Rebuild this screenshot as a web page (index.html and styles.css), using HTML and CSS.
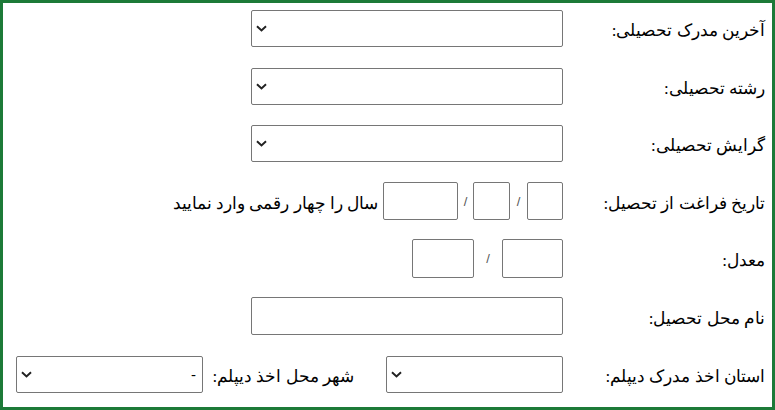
FILE: index.html
```html
<!DOCTYPE html>
<html lang="fa" dir="rtl">
<head>
<meta charset="utf-8">
<link rel="stylesheet" href="styles.css">
</head>
<body>
<div class="frame">
  <div class="row r1">
    <label class="lbl">آخرین مدرک تحصیلی:</label>
    <select class="sel wide"><option></option></select>
  </div>
  <div class="row r2">
    <label class="lbl">رشته تحصیلی:</label>
    <select class="sel wide"><option></option></select>
  </div>
  <div class="row r3">
    <label class="lbl">گرایش تحصیلی:</label>
    <select class="sel wide"><option></option></select>
  </div>
  <div class="row r4">
    <label class="lbl">تاریخ فراغت از تحصیل:</label>
    <div class="group">
      <input class="box day" type="text">
      <span class="slash s1">/</span>
      <input class="box month" type="text">
      <span class="slash s2">/</span>
      <input class="box year" type="text">
      <span class="hint">سال را چهار رقمی وارد نمایید</span>
    </div>
  </div>
  <div class="row r5">
    <label class="lbl">معدل:</label>
    <div class="group avg">
      <input class="box avgbox2" type="text">
      <span class="slash s3">/</span>
      <input class="box avgbox" type="text">
    </div>
  </div>
  <div class="row r6">
    <label class="lbl">نام محل تحصیل:</label>
    <input class="box wide tall" type="text">
  </div>
  <div class="row r7">
    <label class="lbl">استان اخذ مدرک دیپلم:</label>
    <select class="sel prov"><option></option></select>
    <label class="lbl2">شهر محل اخذ دیپلم:</label>
    <select class="sel city"><option>-</option></select>
  </div>
</div>
</body>
</html>
```

FILE: styles.css
```css
html, body {
  margin: 0;
  padding: 0;
  background: #ffffff;
}
body {
  font-family: "Liberation Serif", "DejaVu Serif", serif;
  font-size: 17px;
  color: #000;
}
.frame {
  box-sizing: border-box;
  width: 775px;
  height: 410px;
  border: 3px solid #1d7a38;
  padding: 7px 7px 0 0;
  direction: rtl;
  display: flex;
  flex-direction: column;
}
.row {
  display: flex;
  align-items: center;
  direction: rtl;
}
.r1 { margin-top: 0; }
.r2 { margin-top: 21px; }
.r3 { margin-top: 20px; }
.r4 { margin-top: 20px; }
.r5 { margin-top: 19px; }
.r6 { margin-top: 19px; }
.r7 { margin-top: 21px; }
.lbl {
  width: 190px;
  margin-left: 12px;
  text-align: right;
  white-space: nowrap;
  padding-top: 4px;
}
.sel, .box {
  box-sizing: border-box;
  margin: 0;
  border: 1px solid #767676;
  border-radius: 2px;
  background-color: #fff;
  font-family: "Liberation Sans", Arial, sans-serif;
  font-size: 15px;
  color: #000;
  direction: rtl;
}
.sel {
  -webkit-appearance: none;
  appearance: none;
  height: 37px;
  padding: 0 6px 0 24px;
  background-image: url("data:image/svg+xml;utf8,<svg xmlns='http://www.w3.org/2000/svg' width='11' height='7' viewBox='0 0 11 7'><path d='M1 1.2 L5.5 5.4 L10 1.2' fill='none' stroke='%23222' stroke-width='2'/></svg>");
  background-repeat: no-repeat;
  background-position: 4px center;
  background-size: 11px 7px;
}
.wide {
  width: 312px;
}
.tall {
  height: 39px;
}
.group {
  display: flex;
  align-items: center;
}
.box {
  height: 38px;
  padding: 0 4px;
}
.day { width: 36px; }
.month { width: 37px; }
.year { width: 75px; }
.slash {
  font-family: "Liberation Sans", Arial, sans-serif;
  font-size: 13px;
  color: #555;
  display: inline-block;
  text-align: center;
}
.s1 { width: 17px; }
.s2 { width: 15px; }
.s3 { width: 28px; }
.hint {
  margin-right: 5px;
  white-space: nowrap;
  padding-top: 4px;
}
.avgbox { width: 62px; height: 39px; }
.avgbox2 { width: 61px; height: 39px; }
.prov { width: 177px; height: 37px; }
.lbl2 {
  width: 144px;
  text-align: right;
  margin-right: 32px;
  margin-left: 7px;
  white-space: nowrap;
  padding-top: 4px;
}
.city { width: 187px; height: 37px; }
```
